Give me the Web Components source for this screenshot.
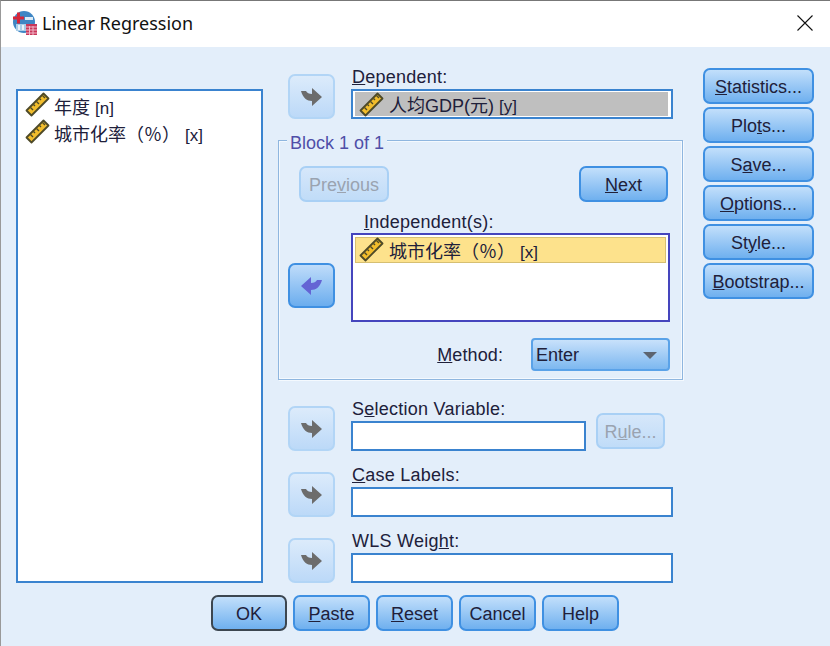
<!DOCTYPE html>
<html>
<head>
<meta charset="utf-8">
<title>Linear Regression</title>
<style>
html, body { margin: 0; padding: 0; background: #e3eefa; }
body { font-family: "Liberation Sans", "Noto Sans CJK SC", sans-serif; font-size: 18px; color: #20203a; }
</style>
</head>
<body>
<spss-dialog>
  <spss-list slot="vars" style="height:494px;margin-top:23px">
    <spss-var name="年度" tag="[n]"></spss-var>
    <spss-var name="城市化率（％）" tag="[x]"></spss-var>
  </spss-list>

  <spss-target slot="center"><span slot="label"><u>D</u>ependent:</span>
    <spss-field style="height:30px" selected>
      <spss-var name="人均GDP(元)" tag="[y]"></spss-var>
    </spss-field>
  </spss-target>

  <spss-block slot="center" style="margin-top:21px"></spss-block>

  <spss-target slot="center" style="margin-top:18px"><span slot="label">S<u>e</u>lection Variable:</span>
    <div style="display:flex;align-items:flex-end;gap:10px;height:30px">
      <spss-field style="width:235px;height:30px;flex:none"></spss-field>
      <spss-button disabled style="width:69px;height:36px;margin-bottom:2px;flex:none">R<u>u</u>le...</spss-button>
    </div>
  </spss-target>
  <spss-target slot="center" style="margin-top:13px"><span slot="label"><u>C</u>ase Labels:</span>
    <spss-field style="height:30px"></spss-field>
  </spss-target>
  <spss-target slot="center" style="margin-top:13px"><span slot="label">WLS Weig<u>h</u>t:</span>
    <spss-field style="height:30px"></spss-field>
  </spss-target>

  <spss-button slot="side"><u>S</u>tatistics...</spss-button>
  <spss-button slot="side">Plo<u>t</u>s...</spss-button>
  <spss-button slot="side">S<u>a</u>ve...</spss-button>
  <spss-button slot="side"><u>O</u>ptions...</spss-button>
  <spss-button slot="side">St<u>y</u>le...</spss-button>
  <spss-button slot="side"><u>B</u>ootstrap...</spss-button>

  <spss-button slot="footer" default style="width:76px">OK</spss-button>
  <spss-button slot="footer" style="width:77px"><u>P</u>aste</spss-button>
  <spss-button slot="footer" style="width:77px"><u>R</u>eset</spss-button>
  <spss-button slot="footer" style="width:77px">Cancel</spss-button>
  <spss-button slot="footer" style="width:77px">Help</spss-button>
</spss-dialog>

<script>
const RULER = `<svg width="25" height="25" viewBox="0 0 25 25">
  <path d="M1.5 18.5 18.5 1.5 23.5 6.5 6.5 23.5Z" fill="#f2bd2c" stroke="#4e4a28" stroke-width="1.8" stroke-linejoin="round"/>
  <path d="M5.5 15.5 8 18M8.5 12.5 10 14M11.5 9.5 14 12M14.500 6.500 16 8M17.500 3.500 20 6" stroke="#4e4a28" stroke-width="1.4" fill="none"/>
</svg>`;

function createComponent(name, styles, template) {
    customElements.define(name, class extends HTMLElement {
        connectedCallback() {
            if (this.shadowRoot) return;
            const shadow = this.attachShadow({ mode: 'open' });
            shadow.innerHTML = `<style>${styles}</style>` + template(this);
        }
    });
}

createComponent('spss-dialog', `
    :host { display: block; width: 829px; height: 645px; overflow: hidden; background: #e3eefa;
        border-top: 1px solid #777; border-left: 1px solid #999; }
    .bar { display: flex; align-items: center; box-sizing: border-box; height: 46px; background: #fff;
        padding: 0 17px 2px 12px; gap: 5px;
        font: 18px "Noto Sans", "Liberation Sans", sans-serif; color: #111; }
    .bar span { flex: 1; }
    .main { display: grid; grid-template-columns: 247px 405px 116px; column-gap: 15px; padding: 19px 0 0 15px; }
    .main > .center { display: flex; flex-direction: column; }
    .main > .side { display: flex; flex-direction: column; gap: 3px; margin: 2px 0 0 5px; }
    .foot { display: flex; gap: 6px; margin: 12px 0 0 210px; }
`, () => `
    <div class="bar">
      <svg width="24" height="24" viewBox="0 0 24 24">
        <circle cx="11" cy="11" r="11" fill="#3f86c4"/>
        <path d="M3 13h15v7H3z" fill="#a9cde8"/>
        <path d="M5 14h2v5H5zM9 14h2v5H9z" fill="#e8f2fa"/>
        <path d="M12 6h8v3h-8z" fill="#dcebf7"/>
        <path d="M4 1.500h3v4h4v3H7v4H4v-4H0v-3h4z" fill="#d6263a"/>
        <path d="M13 13h11v11H13z" fill="#c9375a"/>
        <path d="M13 16h11M13 19h11M13 22h11M16.500 15v9M20 15v9" stroke="#f0b8c8" stroke-width="1"/>
      </svg>
      <span>Linear Regression</span>
      <svg width="16" height="16" viewBox="0 0 16 16"><path d="M.5.5l15 15M15.500.5l-15 15" stroke="#111" stroke-width="1.100" fill="none"/></svg>
    </div>
    <div class="main">
      <div><slot name="vars"></slot></div>
      <div class="center"><slot name="center"></slot></div>
      <div class="side"><slot name="side"></slot></div>
    </div>
    <div class="foot"><slot name="footer"></slot></div>
`);

createComponent('spss-button', `
    :host { display: flex; align-items: center; justify-content: center; box-sizing: border-box; height: 36px;
        padding-top: 2px; border: 2px solid #3f90e2; border-radius: 7px; background: linear-gradient(#c2dffb, #6fb0ef);
        color: #20203a; font: 18px "Liberation Sans", sans-serif; white-space: nowrap; }
    :host([disabled]) { background: linear-gradient(#d6e7fa, #c0dcf8); border-color: #a9d0f5; color: #9aa3b0; }
    :host([default]) { border-color: #3c4650; }
`, () => `<slot></slot>`);

createComponent('spss-arrow', `
    :host { display: flex; align-items: center; justify-content: center; box-sizing: border-box; width: 47px; height: 45px;
        border: 2px solid #b2d5f6; border-radius: 7px; background: linear-gradient(#dcebfb, #bcd9f8); }
    :host([active]) { border-color: #3f90e2; background: linear-gradient(#bfdcfa, #6badee); }
`, (el) => el.hasAttribute('active')
    ? `<svg width="21" height="18" viewBox="0 0 21 18"><path d="M21 3H16C15 5 13 6 10 6V0L0 9 10 18V13C15 13 19 10 21 3Z" fill="#6464d4"/></svg>`
    : `<svg width="21" height="18" viewBox="0 0 21 18"><path d="M0 3H5C6 5 8 6 11 6V0L21 9 11 18V13C6 13 2 10 0 3Z" fill="#6c6c6c"/></svg>`);

createComponent('spss-var', `
    :host { display: flex; align-items: center; box-sizing: border-box; height: 27px; padding-left: 7px; gap: 5px; white-space: nowrap;
        font: 18px "Liberation Sans", "Noto Sans CJK SC", sans-serif; color: #20203a; }
    svg { flex: none; transform: translateY(var(--ruler-shift, -1px)); }
    .tag { font-size: 17px; }
`, (el) => `${RULER}<span>${el.getAttribute('name')} <span class="tag">${el.getAttribute('tag')}</span></span>`);

createComponent('spss-list', `
    :host { display: block; box-sizing: border-box; background: #fff; border: 2px solid #3a83cf; padding-top: 2px; }
    ::slotted(spss-var) { gap: 4px; padding-bottom: 2px; }
`, () => `<slot></slot>`);

createComponent('spss-field', `
    :host { display: block; box-sizing: border-box; background: #fff; border: 2px solid #3a83cf; padding: 1px 3px 1px 2px; --ruler-shift: 0px; }
    ::slotted(spss-var) { height: 24px; background: #bfbfbf; padding-left: 4px; }
`, () => `<slot></slot>`);

createComponent('spss-target', `
    :host { display: grid; grid-template-columns: 47px 322px; column-gap: 16px; padding-left: 10px; }
    spss-arrow { grid-row: 2; align-self: end; margin-top: -22px; }
    .label { grid-column: 2; height: 20px; margin-bottom: 3px; line-height: 22px; padding-left: 1px; letter-spacing: .25px; }
    .body { grid-column: 2; grid-row: 2; }
`, () => `
    <div class="label"><slot name="label"></slot></div>
    <spss-arrow></spss-arrow>
    <div class="body"><slot></slot></div>
`);

createComponent('spss-combo', `
    :host { display: flex; align-items: center; justify-content: space-between; box-sizing: border-box; width: 139px; height: 33px;
        padding: 2px 11px 0 3px; border: 2px solid #5aa2e8; border-radius: 4px; background: linear-gradient(#c8e1fb, #7db8f0);
        font: 18px "Liberation Sans", sans-serif; }
    i { width: 0; height: 0; border: 7px solid transparent; border-top: 7px solid #5c6470; border-bottom: 0; }
`, () => `<span>Enter</span><i></i>`);

createComponent('spss-block', `
    :host { display: block; position: relative; box-sizing: border-box; height: 240px; padding: 25px 14px 0 20px;
        border: 1px solid #8fb6df; box-shadow: inset 0 0 0 1px #f4f9fe, 1px 1px 0 #f4f9fe; }
    .legend { position: absolute; left: 8px; top: -9px; padding: 0 3px; height: 22px; line-height: 22px;
        background: #e3eefa; color: #4f4fa8; }
    .nav { display: flex; justify-content: space-between; }
    .nav spss-button { width: 89px; }
    .nav spss-button[disabled] { width: 90px; }
    .ind { display: grid; grid-template-columns: 47px 319px; column-gap: 16px; margin: 9px 0 0 -11px; }
    .ind .lab { grid-column: 2; height: 20px; line-height: 22px; margin-bottom: 2px; padding-left: 13px; letter-spacing: .25px; }
    .ind spss-arrow { align-self: end; margin-bottom: 14px; }
    .box { box-sizing: border-box; height: 89px; background: #fff; border: 2px solid #4545bd; padding: 2px; }
    .box spss-var { height: 26px; background: #fde28c; outline: 1px solid #d6bf72; outline-offset: -1px; padding-left: 4px; }
    .method { display: flex; justify-content: flex-end; align-items: center; gap: 28px; margin: 16px -2px 0 0; }
    .method span { padding-top: 2px; letter-spacing: .1px; }
`, () => `
    <div class="legend">Block 1 of 1</div>
    <div class="nav">
      <spss-button disabled>Pre<u>v</u>ious</spss-button>
      <spss-button><u>N</u>ext</spss-button>
    </div>
    <div class="ind">
      <div class="lab"><u>I</u>ndependent(s):</div>
      <spss-arrow active></spss-arrow>
      <div class="box"><spss-var name="城市化率（％）" tag="[x]"></spss-var></div>
    </div>
    <div class="method"><span><u>M</u>ethod:</span><spss-combo></spss-combo></div>
`);
</script>
</body>
</html>
